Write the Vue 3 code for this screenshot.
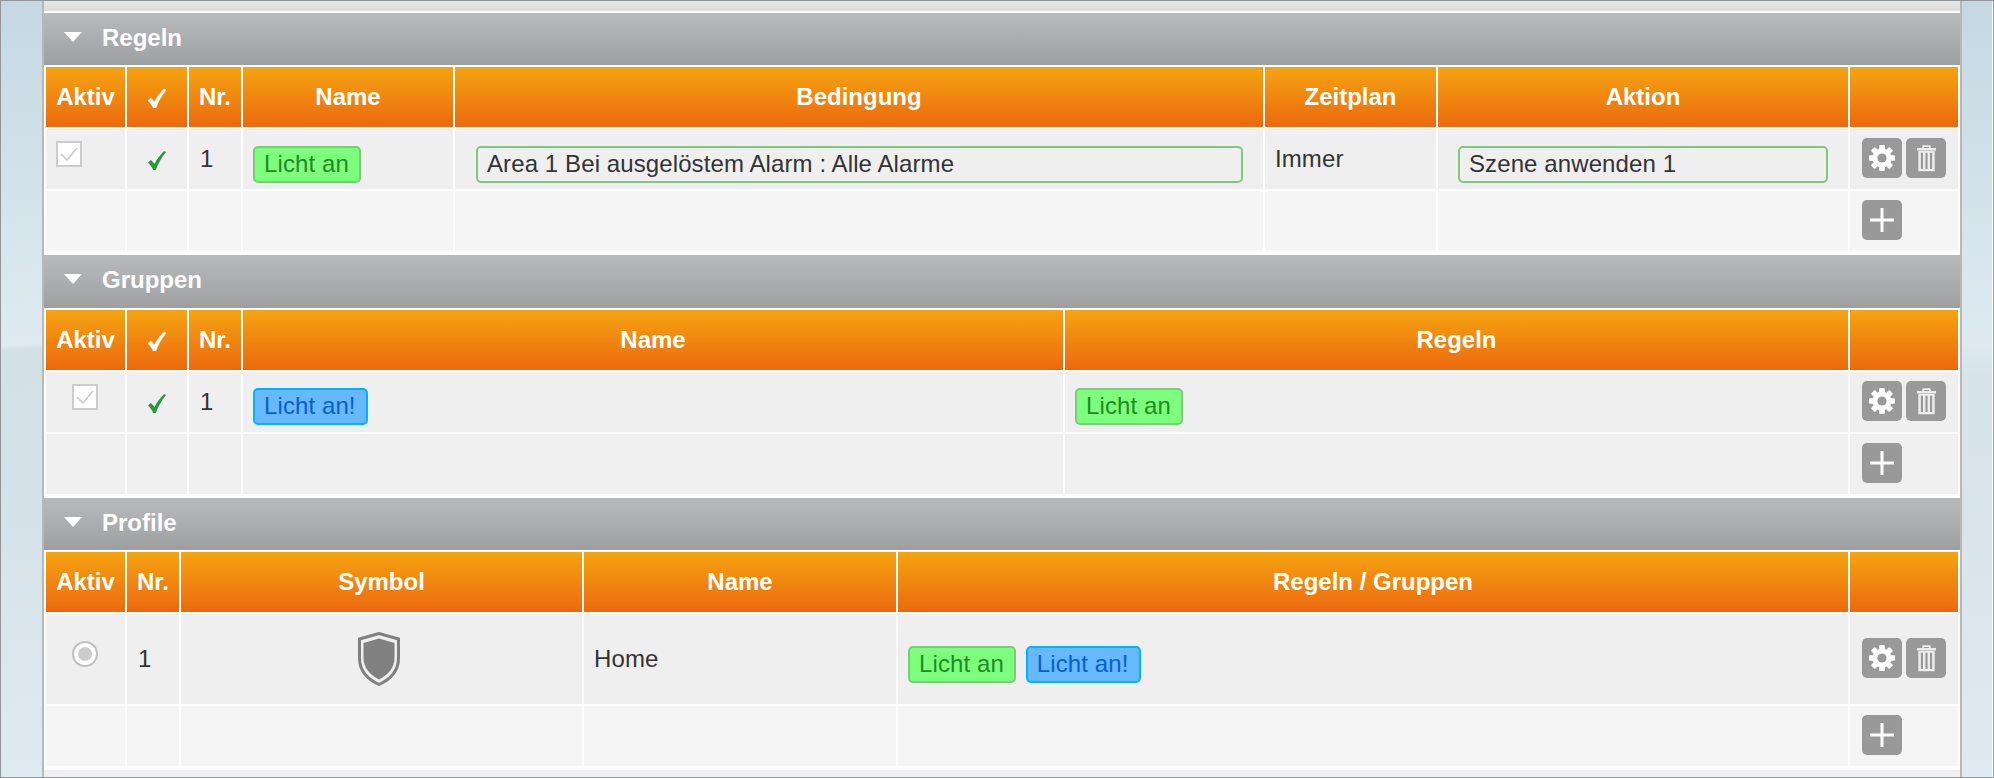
<template>
  <div class="page">
    <svg class="defs" width="0" height="0">
      <symbol id="tick" viewBox="0 0 18 19">
        <path d="M0 11.5 L3 9 L6.5 13 C8.5 8.5 12.5 3.5 16 0 L18 1 C14 6 10 12.5 7.8 19 L5.2 19 C4 16 2 13.5 0 11.5Z" />
      </symbol>
      <symbol id="gear" viewBox="0 0 28 28">
        <circle cx="14" cy="14" r="9.6" fill="#fff" />
        <rect
          v-for="a in [0, 45, 90, 135, 180, 225, 270, 315]"
          :key="a"
          x="11.2"
          y="1"
          width="5.6"
          height="5"
          rx="1"
          fill="#fff"
          :transform="`rotate(${a} 14 14)`"
        />
        <circle cx="14" cy="14" r="4.6" fill="#999" />
      </symbol>
      <symbol id="trash" viewBox="0 0 20 28">
        <path d="M6.5 3.5 V1 H13.5 V3.5" fill="none" stroke="#eee" stroke-width="1.8" />
        <rect x="0" y="3" width="20" height="2.6" fill="#eee" />
        <rect x="1.4" y="6" width="17.2" height="21.5" rx="1" fill="#eee" />
        <path d="M5.2 8 V25 M10 8 V25 M14.8 8 V25" stroke="#999" stroke-width="2.3" />
      </symbol>
      <symbol id="plus" viewBox="0 0 24 24">
        <path d="M12 0 V24 M0 12 H24" stroke="#fff" stroke-width="3" />
      </symbol>
      <symbol id="shield" viewBox="0 0 42 54">
        <path d="M21 1.5 L40.5 7 V26 C40.5 39 32 47.5 21 52.5 C10 47.5 1.5 39 1.5 26 V7 Z" fill="#efefef" stroke="#808080" stroke-width="3" />
        <path d="M21 6.5 L36.5 11 V26 C36.5 36 29.5 43.5 21 47.5 C12.5 43.5 5.5 36 5.5 26 V11 Z" fill="#808080" />
      </symbol>
    </svg>

    <div class="side side-left"></div>

    <main class="panel">
      <div class="top-strip"></div>

      <!-- Regeln -->
      <section class="section">
        <div class="section-head">
          <span class="arrow"></span>
          <span>Regeln</span>
        </div>
        <table>
          <colgroup>
            <col v-for="w in ruleCols" :key="w" :style="{ width: w + 'px' }" />
          </colgroup>
          <thead>
            <tr>
              <th>Aktiv</th>
              <th><svg class="tick"><use href="#tick" /></svg></th>
              <th>Nr.</th>
              <th>Name</th>
              <th>Bedingung</th>
              <th>Zeitplan</th>
              <th>Aktion</th>
              <th></th>
            </tr>
          </thead>
          <tbody>
            <tr>
              <td><span class="check"><svg viewBox="0 0 22 22"><path d="M3 11 L9 17 L19 5" /></svg></span></td>
              <td class="center"><svg class="tick green"><use href="#tick" /></svg></td>
              <td class="num">1</td>
              <td><div class="pills"><span class="pill green-pill">Licht an</span></div></td>
              <td><div class="pills cond"><span class="pill outline">Area 1 Bei ausgelöstem Alarm : Alle Alarme</span></div></td>
              <td>Immer</td>
              <td><div class="pills act"><span class="pill outline">Szene anwenden 1</span></div></td>
              <td class="tools">
                <div class="btns">
                  <button class="icon-btn"><svg class="gear"><use href="#gear" /></svg></button>
                  <button class="icon-btn"><svg class="trash"><use href="#trash" /></svg></button>
                </div>
              </td>
            </tr>
            <tr class="add-row">
              <td></td><td></td><td></td><td></td><td></td><td></td><td></td>
              <td class="tools">
                <div class="btns"><button class="icon-btn"><svg class="plus"><use href="#plus" /></svg></button></div>
              </td>
            </tr>
          </tbody>
        </table>
      </section>

      <!-- Gruppen -->
      <section class="section">
        <div class="section-head tall">
          <span class="arrow"></span>
          <span>Gruppen</span>
        </div>
        <table class="groups">
          <colgroup>
            <col v-for="w in groupCols" :key="w" :style="{ width: w + 'px' }" />
          </colgroup>
          <thead>
            <tr>
              <th>Aktiv</th>
              <th><svg class="tick"><use href="#tick" /></svg></th>
              <th>Nr.</th>
              <th>Name</th>
              <th>Regeln</th>
              <th></th>
            </tr>
          </thead>
          <tbody>
            <tr>
              <td class="center"><span class="check centered"><svg viewBox="0 0 22 22"><path d="M3 11 L9 17 L19 5" /></svg></span></td>
              <td class="center"><svg class="tick green"><use href="#tick" /></svg></td>
              <td class="num">1</td>
              <td><div class="pills"><span class="pill blue-pill">Licht an!</span></div></td>
              <td><div class="pills"><span class="pill green-pill">Licht an</span></div></td>
              <td class="tools">
                <div class="btns">
                  <button class="icon-btn"><svg class="gear"><use href="#gear" /></svg></button>
                  <button class="icon-btn"><svg class="trash"><use href="#trash" /></svg></button>
                </div>
              </td>
            </tr>
            <tr class="add-row flat">
              <td></td><td></td><td></td><td></td><td></td>
              <td class="tools">
                <div class="btns"><button class="icon-btn"><svg class="plus"><use href="#plus" /></svg></button></div>
              </td>
            </tr>
          </tbody>
        </table>
      </section>

      <!-- Profile -->
      <section class="section">
        <div class="section-head">
          <span class="arrow"></span>
          <span>Profile</span>
        </div>
        <table>
          <colgroup>
            <col v-for="w in profileCols" :key="w" :style="{ width: w + 'px' }" />
          </colgroup>
          <thead>
            <tr>
              <th>Aktiv</th>
              <th>Nr.</th>
              <th>Symbol</th>
              <th>Name</th>
              <th>Regeln / Gruppen</th>
              <th></th>
            </tr>
          </thead>
          <tbody>
            <tr class="big-row">
              <td class="center"><span class="radio"></span></td>
              <td class="num">1</td>
              <td class="center"><svg class="shield"><use href="#shield" /></svg></td>
              <td>Home</td>
              <td>
                <div class="pills">
                  <span class="pill green-pill">Licht an</span>
                  <span class="pill blue-pill">Licht an!</span>
                </div>
              </td>
              <td class="tools">
                <div class="btns">
                  <button class="icon-btn"><svg class="gear"><use href="#gear" /></svg></button>
                  <button class="icon-btn"><svg class="trash"><use href="#trash" /></svg></button>
                </div>
              </td>
            </tr>
            <tr class="add-row">
              <td></td><td></td><td></td><td></td><td></td>
              <td class="tools">
                <div class="btns"><button class="icon-btn"><svg class="plus"><use href="#plus" /></svg></button></div>
              </td>
            </tr>
          </tbody>
        </table>
      </section>

      <div class="bottom-strip"></div>
    </main>

    <div class="side side-right"></div>
  </div>
</template>

<script setup>
const ruleCols = [79, 60, 52, 210, 808, 171, 410, 108]
const groupCols = [79, 60, 52, 820, 783, 108]
const profileCols = [79, 52, 401, 312, 950, 108]
</script>

<style>
body {
  margin: 0;
  overflow: hidden;
}
</style>

<style scoped>
.page {
  display: flex;
  width: 1994px;
  height: 778px;
  box-sizing: border-box;
  border: 1px solid #8f9598;
  overflow: hidden;
  font-family: "Liberation Sans", Arial, sans-serif;
  font-size: 24px;
  color: #333;
}

.defs {
  position: absolute;
}

.side {
  flex: none;
}

.side-left {
  width: 41px;
  background: linear-gradient(176deg, #c5d8e2 0, #dfebf1 344px, #d3e0e6 349px, #d6e2e9 520px, #e0ebf1 777px);
}

.side-right {
  width: 30px;
  background: linear-gradient(180deg, #c5d8e2 0, #deeaf0 340px, #d6e3e9 375px, #d8e4ea 520px, #e0ebf1 777px);
}

.panel {
  flex: none;
  width: 1916px;
  background: #fff;
  border-left: 2px solid #b8b8b8;
  border-right: 2px solid #b8b8b8;
  display: flex;
  flex-direction: column;
}

.top-strip {
  height: 10px;
  margin-bottom: 2px;
  background: linear-gradient(180deg, #e8e8e8, #dcdcdc);
}

.section {
  margin-bottom: 2px;
}

.section-head {
  height: 52px;
  box-sizing: border-box;
  padding: 0 0 3px 20px;
  display: flex;
  align-items: center;
  gap: 20px;
  background: linear-gradient(180deg, #b9babc, #9e9fa1);
  color: #fff;
  font-weight: 700;
}

.section-head.tall {
  height: 53px;
  padding-bottom: 4px;
}

.arrow {
  width: 0;
  height: 0;
  margin-top: -2px;
  border-left: 9px solid transparent;
  border-right: 9px solid transparent;
  border-top: 10px solid #fff;
}

table {
  width: 1916px;
  table-layout: fixed;
  border-collapse: separate;
  border-spacing: 2px;
  font-size: 24px;
  color: #333;
}

th {
  height: 60px;
  padding: 0;
  color: #fff;
  font-weight: 700;
  text-align: center;
  vertical-align: middle;
  background: linear-gradient(180deg, #f5a412, #ec690e);
}

th .tick {
  stroke: #fff;
  stroke-width: 0.5;
}

td {
  height: 60px;
  padding: 0 10px;
  vertical-align: middle;
  letter-spacing: 0.1px;
  background: #efefef;
}

.big-row td {
  height: 90px;
}

.add-row td {
  background: #f5f5f5;
}

.add-row.flat td {
  background: #f0f0f0;
}

.center {
  text-align: center;
}

.num {
  padding-left: 11px;
}

.tick {
  display: inline-block;
  width: 18px;
  height: 19px;
  vertical-align: middle;
  fill: #fff;
}

.tick.green {
  fill: #27993a;
}

.check {
  display: inline-block;
  box-sizing: border-box;
  width: 26px;
  height: 26px;
  margin-bottom: 10px;
  background: #fff;
  border: 2px solid #ccc;
  vertical-align: middle;
}

.check.centered {
  margin-right: 1px;
}

.check svg {
  display: block;
  width: 22px;
  height: 22px;
}

.check path {
  fill: none;
  stroke: #ccc;
  stroke-width: 1.6;
}

.radio {
  display: inline-block;
  box-sizing: border-box;
  width: 26px;
  height: 26px;
  margin: 0 1px 10px 0;
  border-radius: 50%;
  background: #fff;
  border: 2px solid #c0c0c0;
  vertical-align: middle;
  position: relative;
}

.radio::after {
  content: "";
  position: absolute;
  inset: 4px;
  border-radius: 50%;
  background: #ccc;
}

.shield {
  display: inline-block;
  width: 42px;
  height: 54px;
  margin-right: 5px;
  vertical-align: middle;
}

.pills {
  display: flex;
  gap: 10px;
  margin-top: 11px;
}

.groups .pills {
  margin-top: 9px;
}

.cond {
  margin-left: 11px;
  margin-right: 10px;
}

.act {
  margin-left: 10px;
  margin-right: 10px;
}

.pill {
  box-sizing: border-box;
  height: 37px;
  line-height: 32px;
  padding: 0 10px 0 9px;
  border: 2px solid;
  border-radius: 5px;
  white-space: nowrap;
}

.green-pill {
  background: #7dff7d;
  border-color: #7bcb7b;
  color: #1f8c21;
}

.blue-pill {
  background: #66b8ff;
  border-color: #00b4ff;
  color: #0a60c8;
}

.outline {
  flex: 1;
  border-color: #7bcb7b;
  color: #333;
}

.tools {
  padding: 0 0 0 12px;
}

.btns {
  display: flex;
  gap: 4px;
  margin-bottom: 2px;
}

.icon-btn {
  width: 40px;
  height: 40px;
  padding: 0;
  border: none;
  border-radius: 5px;
  background: #999;
  display: flex;
  align-items: center;
  justify-content: center;
}

.gear {
  width: 28px;
  height: 28px;
}

.trash {
  width: 19px;
  height: 27px;
}

.plus {
  width: 24px;
  height: 24px;
}

.bottom-strip {
  flex: 1;
  background: #f0f0f0;
}
</style>
